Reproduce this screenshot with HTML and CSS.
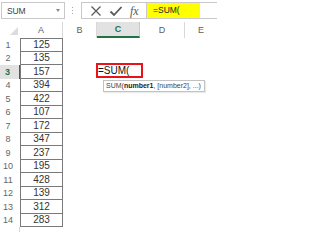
FILE: index.html
```html
<!DOCTYPE html>
<html>
<head>
<meta charset="utf-8">
<link rel="stylesheet" href="styles.css">
</head>
<body>
<div class="app">
  <div class="fbar">
    <div class="namebox"><span class="nb-text">SUM</span><span class="nb-arrow"></span></div>
    <div class="dots"><i></i><i></i><i></i></div>
    <div class="fxbox">
      <svg class="ico" width="14" height="14" viewBox="0 0 14 14"><path d="M2.5 2.5 L11.5 11.5 M11.5 2.5 L2.5 11.5" stroke="#5a5a5a" stroke-width="1.3" fill="none"/></svg>
      <svg class="ico" width="14" height="14" viewBox="0 0 14 14"><path d="M1.5 7.5 L5 11 L12.5 3" stroke="#5a5a5a" stroke-width="1.8" fill="none"/></svg>
      <span class="fx">fx</span>
    </div>
    <div class="input"><span class="yellow">=SUM(</span></div>
  </div>
  <div class="sheet">
    <div class="hd corner"><span class="tri"></span></div>
    <div class="hd col">A</div>
    <div class="hd col">B</div>
    <div class="hd col sel">C</div>
    <div class="hd col">D</div>
    <div class="hd col last">E</div>

    <div class="rh">1</div><div class="a first">125</div><div></div><div></div><div></div><div></div>
    <div class="rh">2</div><div class="a">135</div><div></div><div></div><div></div><div></div>
    <div class="rh rsel">3</div><div class="a">157</div><div></div><div class="c3"><div class="edit">=SUM(</div><div class="tip">SUM(<b>number1</b>, [number2], ...)</div></div><div></div><div></div>
    <div class="rh">4</div><div class="a">394</div><div></div><div></div><div></div><div></div>
    <div class="rh">5</div><div class="a">422</div><div></div><div></div><div></div><div></div>
    <div class="rh">6</div><div class="a">107</div><div></div><div></div><div></div><div></div>
    <div class="rh">7</div><div class="a">172</div><div></div><div></div><div></div><div></div>
    <div class="rh">8</div><div class="a">347</div><div></div><div></div><div></div><div></div>
    <div class="rh">9</div><div class="a">237</div><div></div><div></div><div></div><div></div>
    <div class="rh">10</div><div class="a">195</div><div></div><div></div><div></div><div></div>
    <div class="rh">11</div><div class="a">428</div><div></div><div></div><div></div><div></div>
    <div class="rh">12</div><div class="a">139</div><div></div><div></div><div></div><div></div>
    <div class="rh">13</div><div class="a">312</div><div></div><div></div><div></div><div></div>
    <div class="rh">14</div><div class="a">283</div><div></div><div></div><div></div><div></div>
    <div class="rh r15"></div><div></div><div></div><div></div><div></div><div></div>
  </div>
</div>
</body>
</html>
```
FILE: styles.css
```css
* { box-sizing: border-box; }
html, body { margin: 0; padding: 0; background: #fff; }
body { width: 217px; height: 232px; overflow: hidden; font-family: "Liberation Sans", Arial, sans-serif; }
.app { width: 217px; height: 232px; overflow: hidden; }

.fbar { display: flex; align-items: flex-start; height: 22px; padding-top: 2px; }
.namebox { margin-left: 1px; width: 64px; height: 17px; border: 1px solid #c8c8c8; display: flex; align-items: center; justify-content: space-between; padding: 0 4px 0 5px; }
.nb-text { font-size: 8.5px; color: #404040; letter-spacing: -0.2px; }
.nb-arrow { width: 0; height: 0; border-left: 2.5px solid transparent; border-right: 2.5px solid transparent; border-top: 3px solid #8a8a8a; }
.dots { margin-left: 6px; width: 3px; height: 17px; display: flex; flex-direction: column; align-items: center; justify-content: center; gap: 2px; }
.dots i { display: block; width: 1px; height: 1px; background: #a8a8a8; }
.fxbox { margin-left: 7px; width: 66px; height: 17px; border: 1px solid #c8c8c8; display: flex; align-items: center; padding-left: 7px; gap: 6px; }
.ico { display: block; }
.fx { font-family: "Liberation Serif", "Times New Roman", serif; font-style: italic; font-size: 12px; color: #5a5a5a; margin-left: 1px; line-height: 1; }
.input { flex: 1; height: 17px; border: 1px solid #c8c8c8; border-left: none; border-right: none; }
.yellow { display: block; width: 53px; height: 15px; background: #ffff00; font-size: 8.5px; color: #222; padding-left: 6px; line-height: 15px; }

.sheet { display: grid; grid-template-columns: 20px 43px 34px 43px 45px 32px; grid-template-rows: 16px; grid-auto-rows: 13.5px; }
.hd { display: flex; align-items: center; justify-content: center; font-size: 9px; color: #606060; border-right: 1px solid #d8d8d8; background: #fff; }
.hd.last { border-right: none; }
.corner { position: relative; border-right: none; }
.tri { position: absolute; right: 2px; bottom: 3px; width: 0; height: 0; border-left: 8px solid transparent; border-bottom: 8px solid #dcdcdc; }
.hd.sel { background: #e2e2e2; color: #217346; font-weight: bold; border-bottom: 2px solid #217346; border-right-color: #c8c8c8; }

.rh { font-size: 9px; color: #666; display: flex; align-items: center; justify-content: center; padding-right: 4px; }
.rh.rsel { background: #e2e2e2; color: #217346; font-weight: bold; border-right: 1px solid #217346; }
.rh.r15 { border-right: 1px solid #d4d4d4; }
.a { border-left: 1px solid #7a7a7a; border-right: 1px solid #7a7a7a; border-bottom: 1px solid #7a7a7a; font-size: 10px; color: #333; display: flex; align-items: center; justify-content: center; }
.a.first { border-top: 1px solid #7a7a7a; }

.c3 { position: relative; }
.edit { position: absolute; left: -1px; top: -2px; width: 47px; height: 15px; border: 2px solid #e8141b; font-size: 10px; color: #111; line-height: 11px; padding-left: 0; background: #fff; }
.tip { position: absolute; left: 6px; top: 15px; width: 102px; height: 12px; border: 1px solid #c2c2c2; background: #fff; font-size: 7px; color: #444; line-height: 10px; padding-left: 2px; white-space: nowrap; box-shadow: 1px 1px 1px rgba(0,0,0,0.08); }
.tip b { color: #222; }
```
